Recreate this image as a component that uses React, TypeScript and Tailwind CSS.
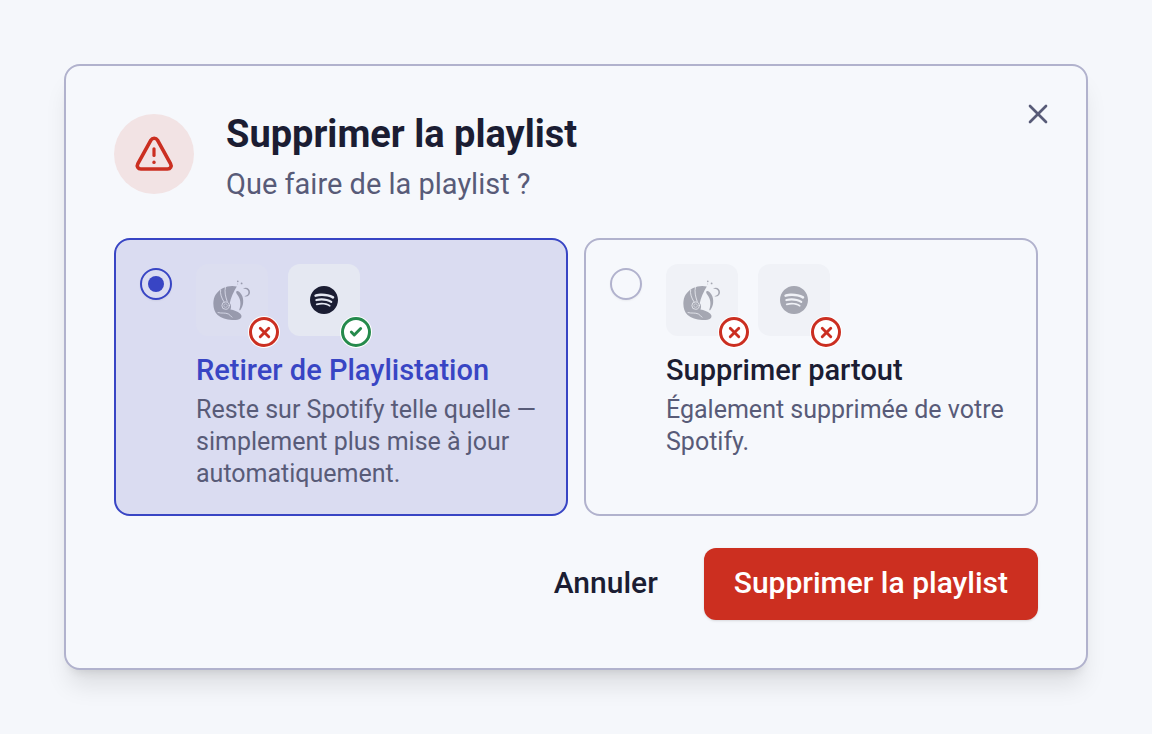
import { useState } from "react";
import clsx from "clsx";
import { SiSpotify } from "react-icons/si";
import { Check, X } from "lucide-react";

type Mode = "detach" | "everywhere";

interface ServiceTileProps {
  service: "playlistation" | "spotify";
  kept?: boolean;
  onTint?: boolean;
}

interface OptionCardProps {
  value: Mode;
  title: string;
  description: string;
  spotifyKept?: boolean;
  checked: boolean;
  onSelect: (value: Mode) => void;
}

const WarningIcon = () => (
  <svg
    viewBox="0 0 40 40"
    className="size-10"
    fill="none"
    stroke="currentColor"
    strokeWidth="3.6"
    strokeLinecap="round"
    strokeLinejoin="round"
    aria-hidden="true"
  >
    <path d="M16.9 6.1 L3.9 29.6 C2.4 32.3 4 35 6.9 35 H33.5 C36.4 35 38 32.3 36.5 29.6 L23.5 6.1 C22 3.6 18.4 3.6 16.9 6.1 Z" />
    <path d="M20 14.8 V21.4" strokeWidth="3.2" />
    <path d="M20 28.3 V28.4" strokeWidth="3.4" />
  </svg>
);

const HelmetLogo = () => (
  <svg viewBox="0 0 40 42" className="h-[42px] w-10" fill="none" aria-hidden="true">
    <path
      fill="currentColor"
      d="M24.8 7.4 C20.5 6.4 15.5 6.8 11.2 9 C6 11.6 2.4 16 1.6 21.5 C0.8 27 2 32.4 5.6 36 C9 39.2 14.5 40.8 20 41 C23 41.2 26.6 41 28.4 39.6 C30 38 29.8 36 28 34.4 C25.4 32.2 22 31 18.4 30.4 C19.4 28.4 19.2 26 17.8 24 C18.8 18.6 21.6 12.4 24.8 7.4 Z"
    />
    <g className="stroke-[#eceef5]" strokeWidth="0.8" strokeLinecap="round">
      <path d="M13.4 8.4 C12.4 12.6 13.4 17.6 15.2 22.4" />
      <path d="M8.6 11 C8 14.6 9.4 19 12 22.8" />
      <path d="M6 33.6 C9.6 34.6 13 33.4 16.4 35 C18 36 19 37.2 20 38.2" />
      <circle cx="13.6" cy="26.6" r="3.7" />
    </g>
    <circle cx="13.6" cy="26.6" r="1.8" className="stroke-[#eceef5]" strokeWidth="0.5" />
    <path
      fill="currentColor"
      d="M24.6 12.2 C26 11.6 28 13 29.6 15.8 C32.2 20.6 31.6 27 28.4 31 C27.6 31.6 27 31.2 27.4 30.2 C29.2 25.8 28.8 19.8 25.2 15.6 C24.2 14.2 23.8 12.8 24.6 12.2 Z"
    />
    <path
      fill="currentColor"
      d="M31 9.8 C34 7.4 38 9.6 38 13.2 C38 16.2 35.4 18 32.4 17.2 C35.2 16.8 36.8 15 36.4 12.8 C36 10.4 33.6 9.2 31 9.8 Z"
    />
    <circle cx="25.8" cy="2.4" r="0.8" fill="currentColor" />
    <circle cx="29.6" cy="4.4" r="0.9" fill="currentColor" />
    <circle cx="25.6" cy="5" r="0.4" fill="currentColor" />
  </svg>
);

const ServiceTile = ({ service, kept = false, onTint = false }: ServiceTileProps) => (
  <span
    className={clsx(
      "relative flex size-[72px] items-center justify-center rounded-xl text-[#1b1d33]",
      kept && "bg-[#e5e8f2]",
      !kept && (onTint ? "bg-[#dcdef0]" : "bg-[#f0f2f7]")
    )}
  >
    <span className={kept ? "" : "opacity-35"}>
      {service === "spotify" ? <SiSpotify size={28} /> : <HelmetLogo />}
    </span>
    <span
      className={clsx(
        "absolute -right-3 -bottom-3 flex size-8 items-center justify-center rounded-full bg-white",
        kept ? "text-[#258a4c]" : "text-[#cb2f21]"
      )}
    >
      <span className="flex size-[30px] items-center justify-center rounded-full border-3 border-current">
        {kept ? <Check size={14} strokeWidth={5} /> : <X size={17} strokeWidth={4} />}
      </span>
    </span>
  </span>
);

const OptionCard = ({
  value,
  title,
  description,
  spotifyKept,
  checked,
  onSelect,
}: OptionCardProps) => (
  <label
    className={clsx(
      "flex flex-1 cursor-pointer items-start gap-6 rounded-2xl border-2 p-6",
      checked ? "border-[#3845c4] bg-[#dadcf1]" : "border-[#b1b2cd]"
    )}
  >
    <input
      type="radio"
      name="delete-mode"
      value={value}
      checked={checked}
      onChange={() => onSelect(value)}
      className="mt-1 grid size-8 shrink-0 appearance-none place-items-center rounded-full border-2 border-[#b1b2cd] shadow-xs before:size-4 before:rounded-full checked:border-[#3845c4] checked:before:bg-[#3845c4]"
    />
    <span className="min-w-0 flex-1">
      <span className="flex gap-5">
        <ServiceTile service="playlistation" onTint={checked} />
        <ServiceTile service="spotify" kept={spotifyKept} onTint={checked} />
      </span>
      <span
        className={clsx(
          "mt-3 block text-[29px] leading-11 font-medium",
          checked ? "text-[#3845c4]" : "text-[#1b1d33]"
        )}
      >
        {title}
      </span>
      <span className="mt-0.5 block text-[25px] leading-8 text-[#585b78]">{description}</span>
    </span>
  </label>
);

const App = () => {
  const [mode, setMode] = useState<Mode>("detach");

  return (
    <main className="min-h-screen bg-[#f5f7fb] p-16 font-['Roboto','Noto_Sans',sans-serif] text-[#1b1d33]">
      <div
        role="dialog"
        aria-labelledby="dialog-title"
        className="relative rounded-2xl border-2 border-[#b1b2cd] bg-[#f6f8fc] p-12 shadow-xl"
      >
        <button
          type="button"
          aria-label="Fermer"
          className="absolute top-7 right-7 flex size-10 items-center justify-center text-[#585b78]"
        >
          <X size={32} strokeWidth={2} />
        </button>

        <header className="flex items-start gap-8">
          <div className="flex size-20 shrink-0 items-center justify-center rounded-full bg-[#f2e3e4] text-[#cb2f21]">
            <WarningIcon />
          </div>
          <div>
            <h2 id="dialog-title" className="text-[38px] leading-10 font-bold">
              Supprimer la playlist
            </h2>
            <p className="mt-2 text-[29px] leading-11 text-[#585b78]">Que faire de la playlist ?</p>
          </div>
        </header>

        <div className="mt-8 flex gap-4">
          <OptionCard
            value="detach"
            title="Retirer de Playlistation"
            description="Reste sur Spotify telle quelle — simplement plus mise à jour automatiquement."
            spotifyKept
            checked={mode === "detach"}
            onSelect={setMode}
          />
          <OptionCard
            value="everywhere"
            title="Supprimer partout"
            description="Également supprimée de votre Spotify."
            checked={mode === "everywhere"}
            onSelect={setMode}
          />
        </div>

        <footer className="mt-8 flex justify-end gap-4 text-[30px] font-medium">
          <button type="button" className="h-[72px] rounded-xl px-[30px] pb-1">
            Annuler
          </button>
          <button
            type="button"
            className="h-[72px] rounded-xl bg-[#cc2f20] px-[30px] pb-1 text-white shadow-sm"
          >
            Supprimer la playlist
          </button>
        </footer>
      </div>
    </main>
  );
};

export default App;
